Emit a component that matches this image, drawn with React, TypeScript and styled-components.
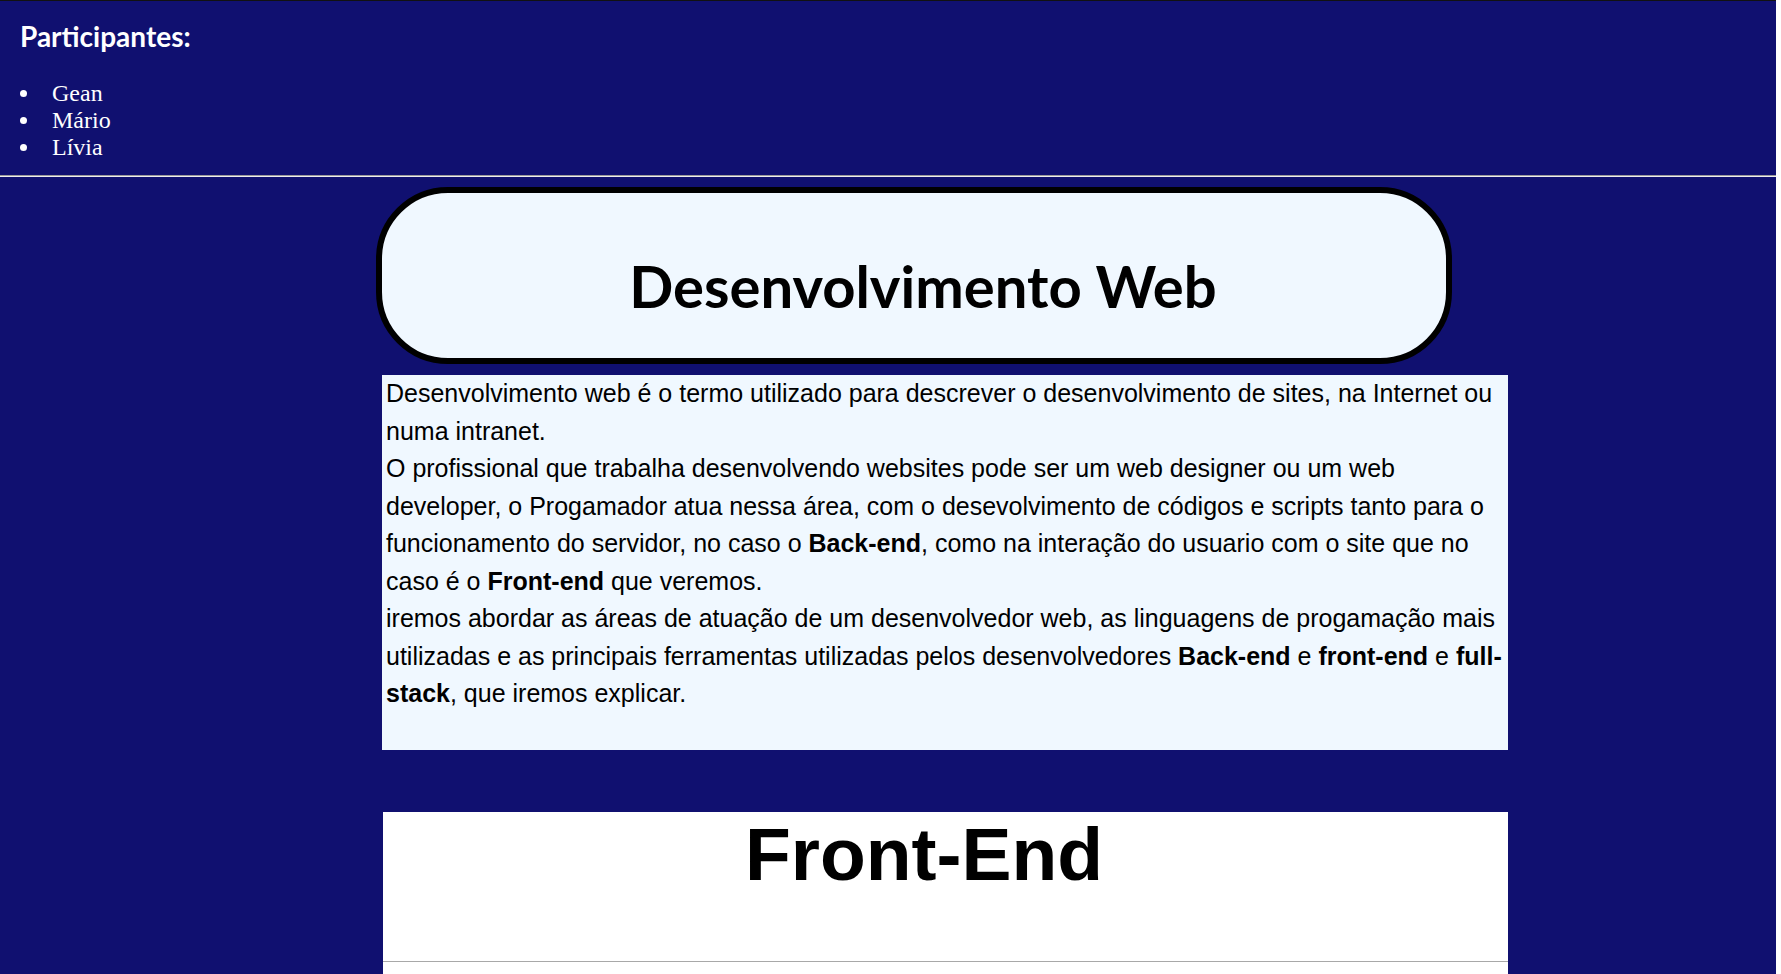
import styled, { createGlobalStyle } from "styled-components";

const GlobalStyle = createGlobalStyle`
  body {
    margin: 0;
    background: #ffffff;
  }
`;

const Page = styled.div`
  width: 1776px;
  min-height: 974px;
  background: #101070;
  border-top: 1px solid #111111;
  box-sizing: border-box;
`;

const Header = styled.header`
  padding: 18px 0 0 20px;
  color: #ffffff;
`;

const HeaderTitle = styled.h3`
  margin: 0 0 27px;
  font-family: Lato, "Liberation Sans", sans-serif;
  font-weight: 700;
  font-size: 28px;
`;

const People = styled.ul`
  margin: 0;
  padding: 0 0 14px 21px;
  font-family: "Liberation Serif", serif;
  font-size: 24px;
`;

const Person = styled.li`
  padding-left: 11px;
`;

const Divider = styled.hr`
  margin: 0;
  border: none;
  border-top: 1px solid #9a9a9a;
  border-bottom: 1px solid #eeeeee;
`;

const Main = styled.main`
  padding: 10px 0 0 376px;
`;

const Banner = styled.div`
  width: 1076px;
  height: 177px;
  box-sizing: border-box;
  border: 6px solid #000000;
  border-radius: 72px;
  background: #f0f8ff;
  display: flex;
  align-items: center;
  justify-content: center;
  padding: 20px 0 0 18px;
  margin-bottom: 11px;
`;

const BannerTitle = styled.h1`
  margin: 0;
  font-family: Lato, "Liberation Sans", sans-serif;
  font-weight: 700;
  font-size: 58px;
  color: #000000;
`;

const Intro = styled.p`
  margin: 0 0 62px 6px;
  width: 1126px;
  box-sizing: border-box;
  padding: 0 3px 37px 4px;
  background: #f0f8ff;
  font-family: "Liberation Sans", Arial, sans-serif;
  font-size: 25px;
  line-height: 37.5px;
  color: #000000;
`;

const Section = styled.section`
  margin-left: 7px;
  width: 1125px;
  background: #ffffff;
  padding-top: 5px;
`;

const SectionTitle = styled.h1`
  margin: 0;
  padding-right: 43px;
  text-align: center;
  font-family: "Liberation Sans", Arial, sans-serif;
  font-weight: 700;
  font-size: 75px;
  line-height: 74px;
  color: #000000;
`;

const SectionRule = styled.hr`
  margin: 70px 0 0;
  border: none;
  border-top: 1px solid #a8a8a8;
  height: 20px;
`;

const participants = ["Gean", "Mário", "Lívia"];

export default function App() {
  return (
    <>
      <GlobalStyle />
      <Page>
        <Header>
          <HeaderTitle>Participantes:</HeaderTitle>
          <People>
            {participants.map((name) => (
              <Person key={name}>{name}</Person>
            ))}
          </People>
        </Header>
        <Divider />
        <Main>
          <Banner>
            <BannerTitle>Desenvolvimento Web</BannerTitle>
          </Banner>
          <Intro>
            Desenvolvimento web é o termo utilizado para descrever o desenvolvimento de sites, na Internet ou numa intranet.
            <br />
            O profissional que trabalha desenvolvendo websites pode ser um web designer ou um web developer, o Progamador atua nessa área, com o desevolvimento de códigos e scripts tanto para o funcionamento do servidor, no caso o <b>Back-end</b>, como na interação do usuario com o site que no caso é o <b>Front-end</b> que veremos.
            <br />
            iremos abordar as áreas de atuação de um desenvolvedor web, as linguagens de progamação mais utilizadas e as principais ferramentas utilizadas pelos desenvolvedores <b>Back-end</b> e <b>front-end</b> e <b>full-stack</b>, que iremos explicar.
          </Intro>
          <Section>
            <SectionTitle>Front-End</SectionTitle>
            <SectionRule />
          </Section>
        </Main>
      </Page>
    </>
  );
}
